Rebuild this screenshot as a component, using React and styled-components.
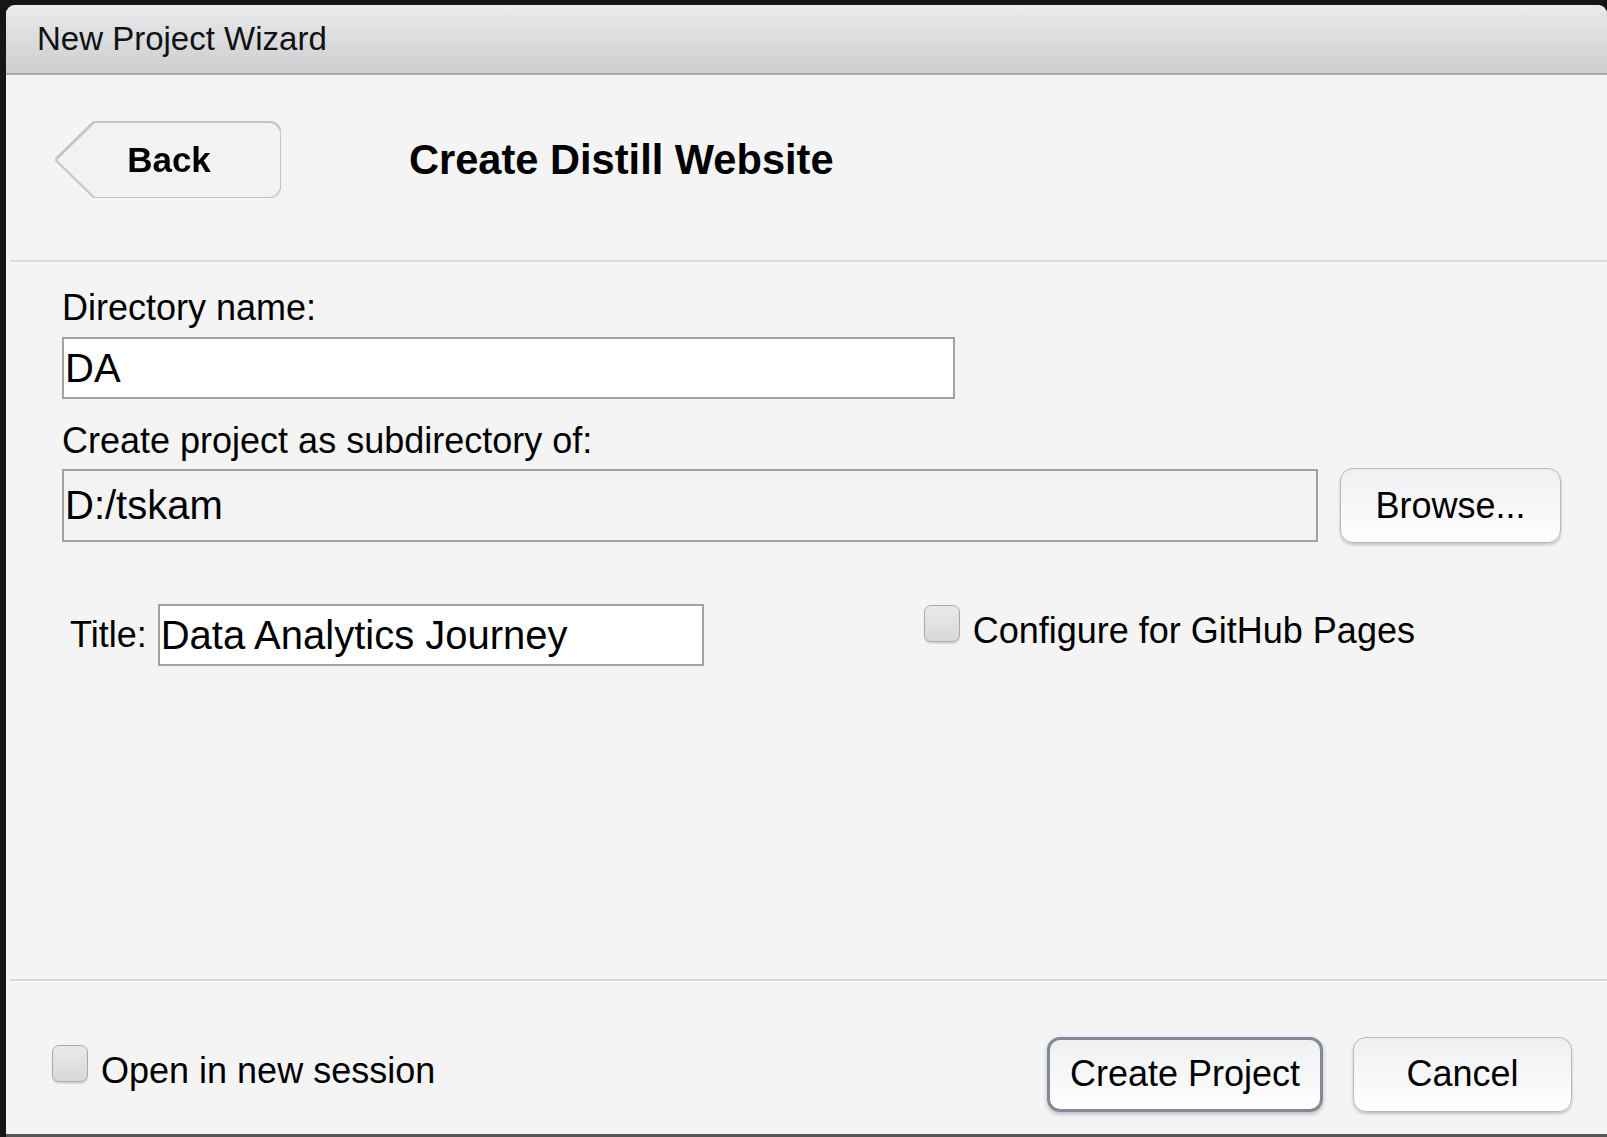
import React from "react";
import styled, { createGlobalStyle } from "styled-components";

const Global = createGlobalStyle`
  html, body { margin: 0; padding: 0; background: #161616; }
  body { font-family: "Liberation Sans", Arial, sans-serif; color: #000; }
  #root { width: 1607px; height: 1137px; overflow: hidden; }
`;

const Screen = styled.div`
  width: 1607px;
  height: 1137px;
  padding: 5px 0 0 6px;
  box-sizing: border-box;
  display: flex;
`;

const Dialog = styled.div`
  flex: 1;
  display: flex;
  flex-direction: column;
  background: #f4f4f4;
  border-radius: 9px 9px 0 0;
  border-bottom: 3px solid #555;
  overflow: hidden;
`;

const TitleBar = styled.div`
  height: 68px;
  flex: none;
  display: flex;
  align-items: center;
  padding-left: 31px;
  background: linear-gradient(#eaebed, #d8d9db 60%, #cdcecf);
  border-bottom: 2px solid #a9aaab;
  font-size: 33px;
  color: #111;
`;

const Header = styled.div`
  height: 185px;
  flex: none;
  display: flex;
  align-items: flex-start;
  padding: 48px 0 0 51px;
  box-sizing: border-box;
`;

const BackWrap = styled.div`
  filter: drop-shadow(1.5px 0 0 #c4c4c4) drop-shadow(-1.5px 0 0 #c4c4c4)
    drop-shadow(0 1.5px 0 #c4c4c4) drop-shadow(0 -1.5px 0 #c4c4c4);
`;

const BackButton = styled.div`
  width: 223px;
  height: 74px;
  display: flex;
  align-items: center;
  justify-content: center;
  padding-left: 1px;
  box-sizing: border-box;
  background: #f2f2f4;
  border-radius: 0 11px 11px 0;
  clip-path: polygon(38px 0, 100% 0, 100% 100%, 38px 100%, 0 50%);
  font-weight: bold;
  font-size: 35px;
`;

const Heading = styled.h1`
  margin: 13px 0 0 129px;
  font-size: 41.6px;
  font-weight: bold;
  line-height: 48px;
`;

const Rule = styled.div`
  height: 2px;
  flex: none;
  margin-left: 4px;
  background: #d9d9d9;
  border-bottom: 1px solid #fbfbfb;
`;

const Body = styled.div`
  flex: 1;
  display: flex;
  flex-direction: column;
  padding: 24px 0 0 56px;
`;

const Label = styled.div`
  font-size: 36px;
  line-height: 42px;
  margin-top: ${(p) => p.$top || 0}px;
`;

const Input = styled.div`
  box-sizing: border-box;
  width: ${(p) => p.$w}px;
  height: ${(p) => p.$h}px;
  margin-top: ${(p) => p.$top || 0}px;
  margin-left: ${(p) => p.$left || 0}px;
  border: 2.5px solid #a2a2a2;
  background: ${(p) => (p.$readonly ? "#f3f3f3" : "#fff")};
  display: flex;
  align-items: center;
  padding-left: 1px;
  font-size: 40px;
  white-space: nowrap;
`;

const Row = styled.div`
  display: flex;
  align-items: center;
  gap: ${(p) => p.$gap || 0}px;
  margin-top: ${(p) => p.$top || 0}px;
  margin-left: ${(p) => p.$left || 0}px;
`;

const Button = styled.div`
  box-sizing: border-box;
  width: ${(p) => p.$w}px;
  height: ${(p) => p.$h}px;
  display: flex;
  align-items: center;
  justify-content: center;
  font-size: 36px;
  border-radius: 13px;
  background: linear-gradient(#eff0f2, #fafafa 70%, #fff);
  border: ${(p) => (p.$default ? "3px solid #828a95" : "1.5px solid #b9b9b9")};
  box-shadow: ${(p) =>
    p.$default
      ? "0 2px 4px rgba(40, 50, 70, 0.3)"
      : "0 2px 3px rgba(0, 0, 0, 0.2)"};
`;

const CheckLabel = styled.div`
  display: flex;
  align-items: center;
  gap: 13px;
  font-size: 36px;
  margin-left: ${(p) => p.$left || 0}px;
  margin-bottom: ${(p) => p.$lift || 0}px;
`;

const Box = styled.div`
  width: 36px;
  height: 37px;
  box-sizing: border-box;
  border-radius: 7px;
  border: 1.5px solid #a8a8a8;
  background: linear-gradient(#e9e9e9, #d9d9d9);
  box-shadow: 0 2px 1px rgba(0, 0, 0, 0.12);
  margin-bottom: ${(p) => p.$raise || 0}px;
  flex: none;
`;

const Footer = styled.div`
  height: 152px;
  flex: none;
  display: flex;
  align-items: center;
  padding: 26px 35px 0 46px;
  box-sizing: border-box;
`;

const Spacer = styled.div`
  flex: 1;
`;

export default function App() {
  return (
    <>
      <Global />
      <Screen>
        <Dialog>
          <TitleBar>New Project Wizard</TitleBar>
          <Header>
            <BackWrap>
              <BackButton>Back</BackButton>
            </BackWrap>
            <Heading>Create Distill Website</Heading>
          </Header>
          <Rule />
          <Body>
            <Label>Directory name:</Label>
            <Input $w={893} $h={62} $top={8}>DA</Input>
            <Label $top={21}>Create project as subdirectory of:</Label>
            <Row $gap={22} $top={6}>
              <Input $w={1256} $h={73} $readonly>D:/tskam</Input>
              <Button $w={221} $h={75}>Browse...</Button>
            </Row>
            <Row $top={61} $left={8}>
              <Label>Title:</Label>
              <Input $w={546} $h={62} $left={11}>
                Data Analytics Journey
              </Input>
              <CheckLabel $left={220} $lift={8}>
                <Box $raise={16} />
                Configure for GitHub Pages
              </CheckLabel>
            </Row>
          </Body>
          <Rule />
          <Footer>
            <CheckLabel>
              <Box $raise={16} />
              Open in new session
            </CheckLabel>
            <Spacer />
            <Row $gap={30} $top={6}>
              <Button $w={276} $h={75} $default>
                Create Project
              </Button>
              <Button $w={219} $h={75}>
                Cancel
              </Button>
            </Row>
          </Footer>
        </Dialog>
      </Screen>
    </>
  );
}
